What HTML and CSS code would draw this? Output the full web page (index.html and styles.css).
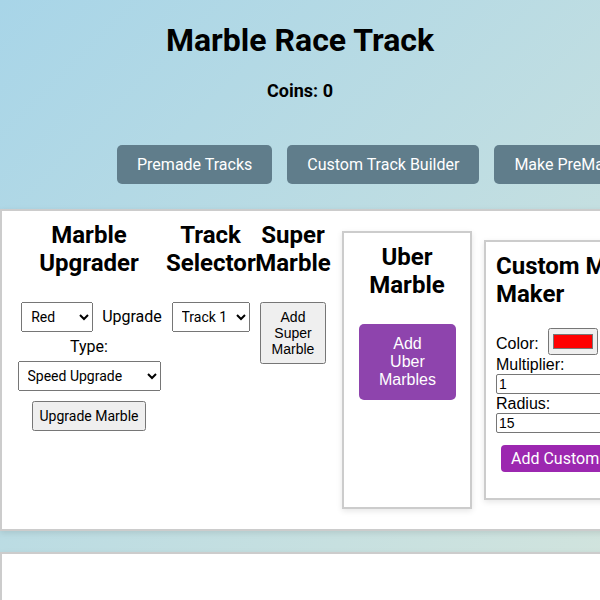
FILE: index.html
```html
<!DOCTYPE html>
<html lang="en">
<head>
    <meta charset="UTF-8">
    <meta name="viewport" content="width=device-width, initial-scale=1.0">
    <title>Marble Race Track</title>
    <link rel="stylesheet" href="styles.css">
</head>
<body>
    <h1>Marble Race Track</h1>
    <p class="coins">Coins: <span id="coins">0</span></p>

    <div class="tabs">
        <button class="tab">Premade Tracks</button>
        <button class="tab">Custom Track Builder</button>
        <button class="tab">Make PreMade Track</button>
    </div>

    <div class="game">
        <div class="panel controls">
            <div class="section upgrader">
                <h2>Marble Upgrader</h2>
                <select id="marbleColor" class="color-select">
                    <option value="red">Red</option>
                    <option value="blue">Blue</option>
                    <option value="green">Green</option>
                </select>
                <label for="upgradeType">Upgrade Type:</label>
                <select id="upgradeType" class="type-select">
                    <option value="speed">Speed Upgrade</option>
                    <option value="size">Size Upgrade</option>
                </select>
                <button class="plain-btn">Upgrade Marble</button>
            </div>

            <div class="section picker">
                <h2>Track Selector</h2>
                <select id="trackSelect" class="track-select">
                    <option value="1">Track 1</option>
                    <option value="2">Track 2</option>
                    <option value="3">Track 3</option>
                </select>
            </div>

            <div class="section super">
                <h2>Super Marble</h2>
                <button class="plain-btn">Add Super Marble</button>
            </div>

            <div class="section uber">
                <h2>Uber Marble</h2>
                <button class="uber-btn">Add Uber Marbles</button>
            </div>

            <div class="maker">
                <h2>Custom Marble Maker</h2>
                <label for="customColor">Color:</label>
                <input type="color" id="customColor" value="#ff0000"><br>
                <label for="customMultiplier">Multiplier:</label>
                <input type="number" id="customMultiplier" class="field" value="1">
                <label for="customRadius">Radius:</label>
                <input type="number" id="customRadius" class="field" value="15">
                <button class="custom-btn">Add Custom Marble</button>
            </div>
        </div>

        <div class="panel track-area"></div>
    </div>
</body>
</html>
```

FILE: styles.css
```css
html {
    overflow-x: hidden;
}
body {
    margin: 0;
    min-height: 100vh;
    font-family: Roboto, "Noto Sans", sans-serif;
    color: #000;
    background: linear-gradient(135deg, #a8d5e8, #d2e4dd) fixed;
}
h1 {
    font-size: 32px;
    text-align: center;
    margin: 21px 0;
}
.coins {
    font-size: 18px;
    font-weight: bold;
    text-align: center;
    margin: 0 0 44px;
}

/* top navigation */
.tabs {
    display: flex;
    gap: 15px;
    padding-left: 117px;
    margin-bottom: 25px;
}
.tab {
    flex: none;
    padding: 10px 20px;
    background-color: #607d8b;
    color: #fff;
    border: none;
    border-radius: 5px;
    font: 16px Roboto, sans-serif;
    white-space: nowrap;
    cursor: pointer;
}

/* game panels */
.game {
    width: max-content;
}
.panel {
    background-color: #fff;
    border: 2px solid #ccc;
    box-shadow: 0 2px 6px rgba(0,0,0,0.1);
}
.controls {
    display: flex;
    align-items: flex-start;
    padding: 10px;
    margin-bottom: 21px;
}
h2 {
    font-size: 24px;
    margin: 0 0 20px;
}
.section {
    text-align: center;
}
.upgrader {
    width: 154px;
}
.picker {
    width: 89px;
}
.super {
    width: 76px;
}
select {
    margin: 5px;
    padding: 5px;
    font: 14px Roboto, sans-serif;
}
.color-select {
    width: 72px;
}
.type-select {
    width: 143px;
}
.track-select {
    width: 78px;
}
.plain-btn {
    margin: 5px;
    padding: 5px 6px;
    font: 14px Roboto, sans-serif;
}
.super .plain-btn {
    font-family: "Liberation Sans", Arial, sans-serif;
}

.uber {
    align-self: stretch;
    width: 130px;
    box-sizing: border-box;
    margin: 10px 11px;
    padding: 10px;
    border: 2px solid #ccc;
    box-shadow: 0 2px 6px rgba(0,0,0,0.1);
}
.uber-btn {
    margin: 5px;
    padding: 11px 20px;
    background-color: #8e44ad;
    color: #fff;
    border: none;
    border-radius: 5px;
    font: 16px "Liberation Sans", Arial, sans-serif;
}

.maker {
    width: 220px;
    box-sizing: border-box;
    margin: 19px 1px;
    padding: 10px 10px 16px;
    border: 2px solid #ccc;
    box-shadow: 0 2px 6px rgba(0,0,0,0.1);
}
.maker label {
    font: 16px "Liberation Sans", Arial, sans-serif;
}
.maker input[type="color"] {
    margin-left: 5px;
}
.field {
    display: block;
    width: 100%;
    height: 20px;
    box-sizing: border-box;
    padding: 1px 2px;
    border: 1px solid #767676;
    border-radius: 2px;
    font: 14px "Liberation Sans", Arial, sans-serif;
}
.custom-btn {
    margin: 12px 5px 10px;
    padding: 4px 10px;
    background-color: #9c27b0;
    color: #fff;
    border: none;
    border-radius: 4px;
    font: 16px Roboto, sans-serif;
}

.track-area {
    height: 300px;
}
```
